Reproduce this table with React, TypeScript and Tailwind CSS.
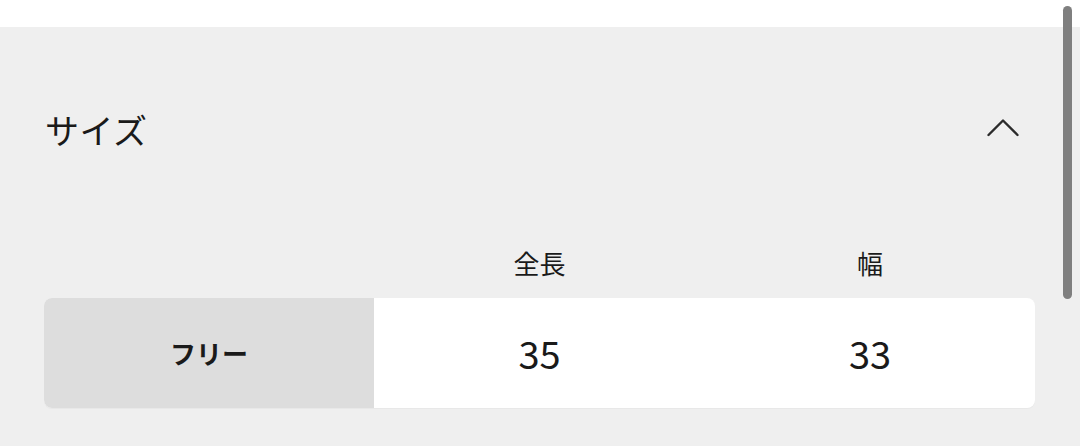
const jp = { fontFamily: '"Noto Sans CJK JP", "Noto Sans", sans-serif' };

const columns = ["全長", "幅"];
const rows = [{ label: "フリー", values: ["35", "33"] }];

function ChevronUp() {
  return (
    <svg width="32" height="20" viewBox="0 0 32 20" fill="none">
      <polyline
        points="1.5,18 16,3.5 30.5,18"
        stroke="#2b2b2b"
        strokeWidth="2.4"
        strokeLinecap="round"
        strokeLinejoin="round"
      />
    </svg>
  );
}

export default function App() {
  return (
    <div className="relative h-[446px] w-[1080px] overflow-hidden bg-white text-[#1a1a1a]" style={jp}>
      <div className="h-[27px] bg-white" />
      <section className="h-[419px] bg-[#efefef] pl-[44px] pr-[45px]">
        {/* Accordion header */}
        <div className="flex h-[206px] items-center justify-between">
          <h2 className="ml-[1px] text-[34px] font-normal leading-none tracking-[0.5px]">サイズ</h2>
          <div className="mr-[16px] mt-[-6px]">
            <ChevronUp />
          </div>
        </div>

        {/* Column labels */}
        <div className="grid h-[65px] grid-cols-[330px_331px_1fr] items-center pb-[6px]">
          <div />
          {columns.map((c) => (
            <div key={c} className="text-center text-[26px] leading-none">
              {c}
            </div>
          ))}
        </div>

        {/* Rows */}
        {rows.map((r) => (
          <div
            key={r.label}
            className="grid h-[110px] grid-cols-[330px_331px_1fr] overflow-hidden rounded-[8px] bg-white shadow-[0_1px_1px_rgba(0,0,0,0.03)]"
          >
            <div className="flex items-center justify-center bg-[#dddddd] text-[26px] font-bold leading-none">
              {r.label}
            </div>
            {r.values.map((v, i) => (
              <div
                key={i}
                className="flex items-center justify-center text-[38px] leading-none"
              >
                {v}
              </div>
            ))}
          </div>
        ))}
      </section>

      {/* Scrollbar overlay */}
      <div className="absolute left-[1063px] top-[6px] h-[293px] w-[9px] rounded-full bg-[#7f7f7f]" />
    </div>
  );
}
